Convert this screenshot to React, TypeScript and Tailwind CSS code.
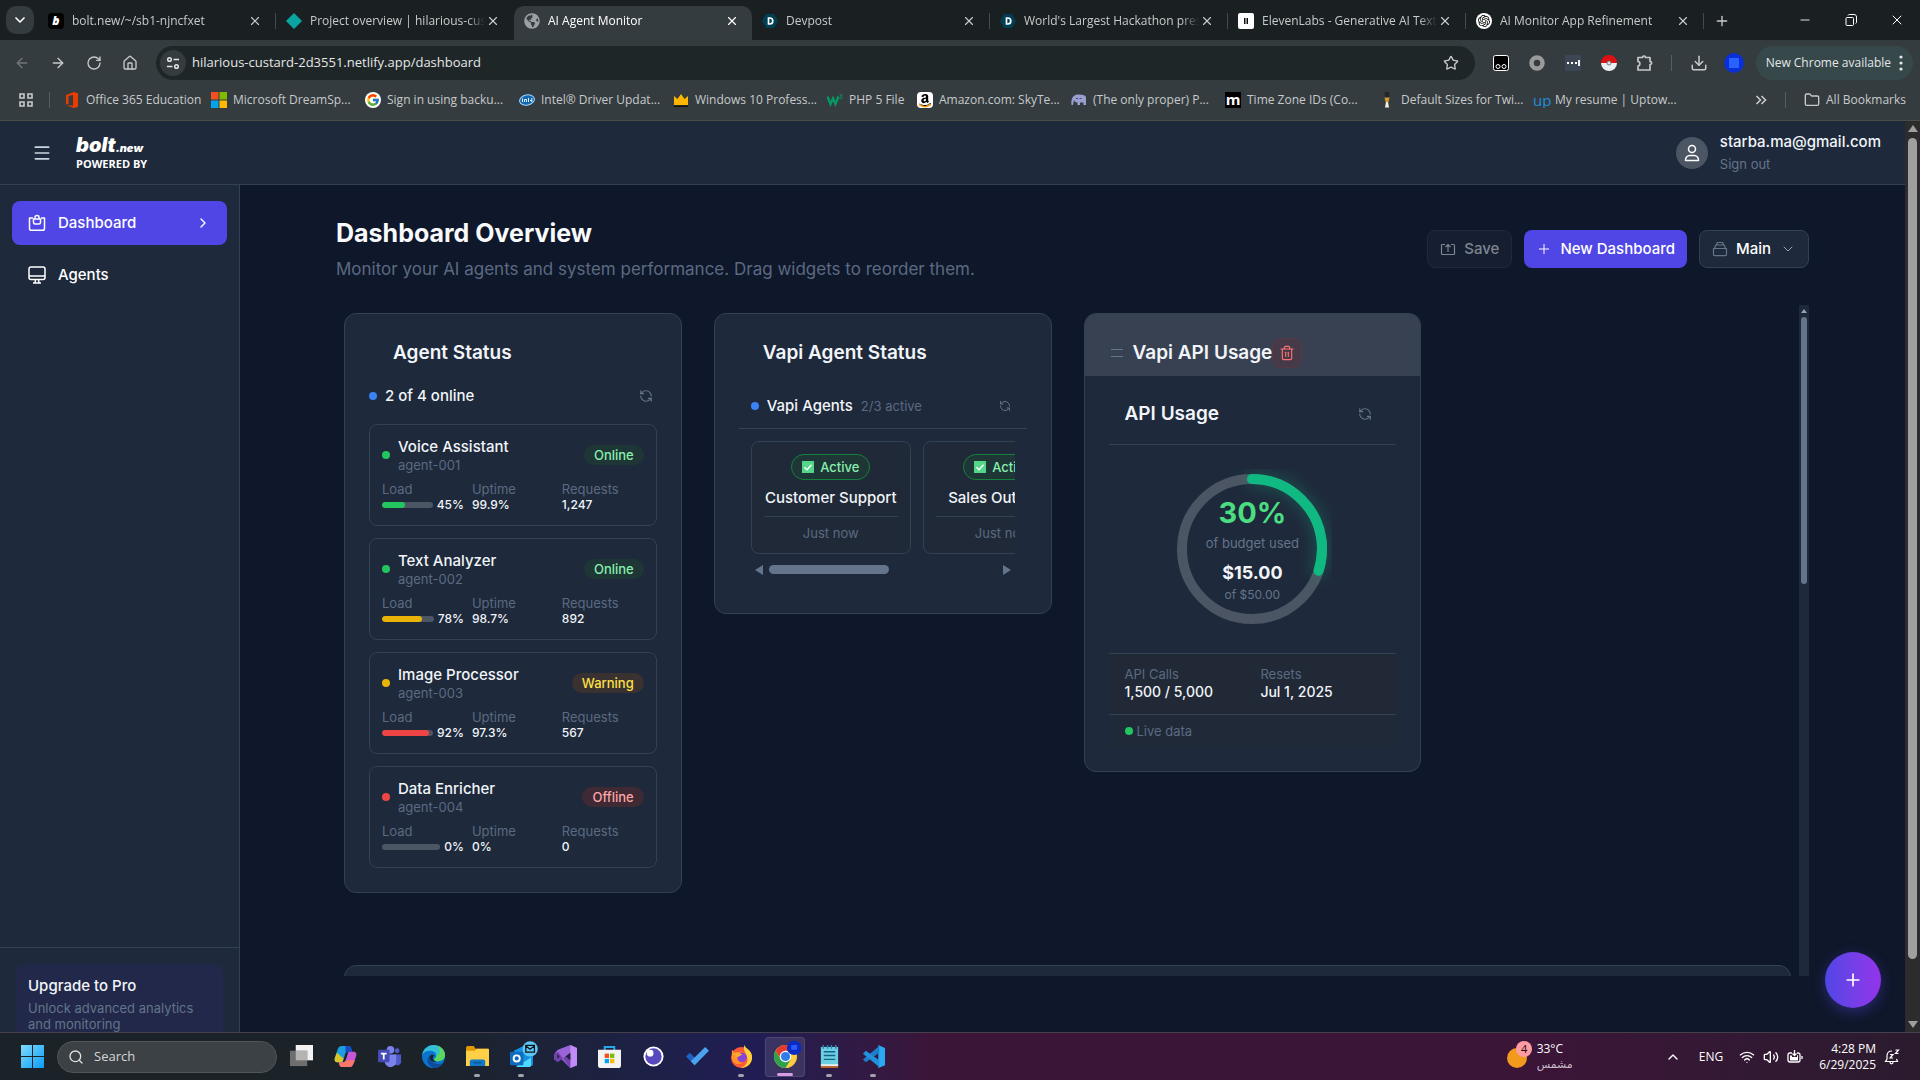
import type { ReactNode } from "react";
import {
  ArrowLeft,
  ArrowRight,
  ChevronDown,
  ChevronRight,
  ChevronUp,
  Download,
  Folder,
  House,
  Menu,
  Minus,
  Plus,
  RefreshCcw,
  RotateCw,
  Search,
  Star,
  Trash2,
  Volume2,
  Wifi,
  X,
} from "lucide-react";
import { FcGoogle } from "react-icons/fc";
import { SiOpenai } from "react-icons/si";
import { FaAmazon, FaGlobeAmericas } from "react-icons/fa";

/* ---------- browser ---------- */

const tabs: { title: string; icon: ReactNode; active?: boolean; divider?: boolean }[] = [
  {
    title: "bolt.new/~/sb1-njncfxet",
    divider: true,
    icon: <span className="grid size-4 place-items-center rounded-sm bg-black text-xs font-black italic text-white">b</span>,
  },
  {
    title: "Project overview | hilarious-cust",
    icon: (
      <svg viewBox="0 0 16 16" className="size-4">
        <path d="M8 0l8 8-8 8-8-8z" fill="#0aa5a0" />
      </svg>
    ),
  },
  { title: "AI Agent Monitor", active: true, icon: <FaGlobeAmericas className="size-4 text-[#9aa0a3]" /> },
  { title: "Devpost", divider: true, icon: <DevpostIcon /> },
  { title: "World's Largest Hackathon pres", divider: true, icon: <DevpostIcon /> },
  {
    title: "ElevenLabs - Generative AI Text",
    divider: true,
    icon: (
      <svg viewBox="0 0 16 16" className="size-4">
        <rect width="16" height="16" rx="2" fill="#fff" />
        <path d="M6 5h1.500v6H6zM8.500 5H10v6H8.500z" fill="#111" />
      </svg>
    ),
  },
  {
    title: "AI Monitor App Refinement",
    divider: true,
    icon: (
      <span className="grid size-4 place-items-center rounded-full bg-white">
        <SiOpenai className="size-3 text-black" />
      </span>
    ),
  },
];

function DevpostIcon() {
  return (
    <svg viewBox="0 0 16 16" className="size-4">
      <path d="M4 1h8l4 7-4 7H4L0 8z" fill="#003e54" />
      <path d="M6.500 5h1.300c2 0 3 1.200 3 3s-1 3-3 3H6.500z" fill="none" stroke="#fff" strokeWidth="1.700" />
    </svg>
  );
}

function WindowsLogo({ className }: { className: string }) {
  return (
    <svg viewBox="0 0 16 16" className={className}>
      <path d="M0 0h7.500v7.500H0z" fill="#f25022" />
      <path d="M8.500 0H16v7.500H8.500z" fill="#7fba00" />
      <path d="M0 8.500h7.500V16H0z" fill="#00a4ef" />
      <path d="M8.500 8.500H16V16H8.500z" fill="#ffb900" />
    </svg>
  );
}

const bookmarks: { label: string; width: string; icon: ReactNode }[] = [
  {
    label: "Office 365 Education",
    width: "w-[147px]",
    icon: (
      <svg viewBox="0 0 16 16" className="size-4">
        <path d="M10 0l4 1.300v13.400L10 16l-8-3 7 .8V3L4.500 4v7.500L2 12.500V3z" fill="#eb3c00" />
      </svg>
    ),
  },
  { label: "Microsoft DreamSp...", width: "w-[154px]", icon: <WindowsLogo className="size-4" /> },
  {
    label: "Sign in using backu...",
    width: "w-[154px]",
    icon: (
      <span className="grid size-4 place-items-center rounded-full bg-white">
        <FcGoogle className="size-3.5" />
      </span>
    ),
  },
  {
    label: "Intel® Driver Updat...",
    width: "w-[154px]",
    icon: (
      <svg viewBox="0 0 16 16" className="size-4">
        <ellipse cx="8" cy="8" rx="7.500" ry="5" fill="#1268b3" stroke="#a8d4f5" transform="rotate(-12 8 8)" />
        <path d="M3.500 6.500v3.500M5.500 10V7.500h2V10M9.500 6v4M11 8.500h2M12.800 6v4" stroke="#e3f2ff" fill="none" />
      </svg>
    ),
  },
  {
    label: "Windows 10 Profess...",
    width: "w-[154px]",
    icon: (
      <svg viewBox="0 0 16 16" className="size-4">
        <path d="M1 4l3.500 3L8 2l3.500 5L15 4v9H1z" fill="#ffb400" />
        <path d="M1 13.500h14V15H1z" fill="#14110a" />
      </svg>
    ),
  },
  {
    label: "PHP 5 File",
    width: "w-[90px]",
    icon: (
      <svg viewBox="0 0 16 16" className="size-4">
        <path d="M.5 4.500L3.500 12 6 6.500 8.500 12l3-7.500" fill="none" stroke="#059862" strokeWidth="2.400" />
        <path d="M12.500 3h2.500l-1.300 1.700c2 0 1.600 2.800-1 2" fill="none" stroke="#059862" />
      </svg>
    ),
  },
  {
    label: "Amazon.com: SkyTe...",
    width: "w-[154px]",
    icon: (
      <span className="relative grid size-4 place-items-center rounded-sm bg-white">
        <FaAmazon className="size-3.5 text-black" />
        <svg viewBox="0 0 14 4" className="absolute bottom-0 h-1 w-3.5" fill="none" stroke="#ff9900" strokeWidth="1.500">
          <path d="M1 .5c4 3 8 3 12 0" />
        </svg>
      </span>
    ),
  },
  {
    label: "(The only proper) P...",
    width: "w-[154px]",
    icon: (
      <svg viewBox="0 0 16 16" className="size-4">
        <path d="M3 4c2-2 10-2 12 1v8h-2.500v-2.500H9V13H6.500v-2.500C4 10.500 3 9 3 7.500L2 13H.5C0 9 1 5 3 4z" fill="#9a9fd0" />
        <path d="M5 6.500h2M8.500 6.500h2" stroke="#40447a" />
      </svg>
    ),
  },
  {
    label: "Time Zone IDs (Co...",
    width: "w-[154px]",
    icon: <span className="grid size-4 place-items-center bg-black pb-0.5 text-[15px] font-bold leading-3 text-white">m</span>,
  },
  {
    label: "Default Sizes for Twi...",
    width: "w-[154px]",
    icon: (
      <svg viewBox="0 0 16 16" className="size-4">
        <path d="M5.500 0h5l-.5 6H6z" fill="#262626" />
        <path d="M5.500 5.500h5L9.500 10h-3z" fill="#d49a32" />
        <path d="M7 10h2l1 5.500H6z" fill="#f5efe0" />
      </svg>
    ),
  },
  {
    label: "My resume | Uptow...",
    width: "w-[154px]",
    icon: <span className="w-4 text-[15px] leading-4 text-[#1d8fdc]">up</span>,
  },
];

function TabStrip() {
  return (
    <div className="flex h-10 items-end bg-[#1a2022]">
      <button aria-label="Search tabs" className="mb-1.5 ml-1.5 grid size-7 shrink-0 place-items-center rounded-[10px] bg-[#353c3f]">
        <ChevronDown className="size-4 text-white" strokeWidth={2.5} />
      </button>
      <div className="ml-1 flex min-w-0 flex-1">
        {tabs.map((tab) => (
          <div
            key={tab.title}
            className={
              tab.active
                ? "flex h-[34px] w-[238px] min-w-0 items-center rounded-t-[10px] bg-[#353c3f] pb-1 pl-2.5 pr-2 text-white"
                : "flex h-[34px] w-[238px] min-w-0 items-center pb-1 pl-2.5 text-[#c7cacb]"
            }
          >
            <span className="shrink-0">{tab.icon}</span>
            <button className="ml-2 min-w-0 flex-1 overflow-hidden whitespace-nowrap text-left mask-r-from-90%">{tab.title}</button>
            <button aria-label="Close tab" className="mr-1 grid size-4 shrink-0 place-items-center">
              <X className="size-3.5" strokeWidth={2} />
            </button>
            {!tab.active && <span className={tab.divider ? "ml-2 h-4 w-px bg-[#454c4f]" : "ml-2 h-4 w-px"} />}
          </div>
        ))}
        <button aria-label="New tab" className="ml-2 grid h-[34px] w-5 place-items-center pb-1 text-[#c7cacb]">
          <Plus className="size-4" />
        </button>
      </div>
      <div className="flex h-10 text-white">
        <button aria-label="Minimize" className="grid w-[46px] place-items-center">
          <Minus className="size-3.5" strokeWidth={1.5} />
        </button>
        <button aria-label="Restore" className="grid w-[46px] place-items-center">
          <svg viewBox="0 0 12 12" className="size-3" fill="none" stroke="currentColor">
            <rect x="1" y="3.500" width="7.500" height="8" rx="1" />
            <path d="M3 1.500C3 1 3.500.5 4.500.5H9C10.500.5 11.500 1.500 11.500 3v5c0 1-.5 1.500-1 1.500" />
          </svg>
        </button>
        <button aria-label="Close" className="grid w-[46px] place-items-center">
          <X className="size-4" strokeWidth={1.5} />
        </button>
      </div>
    </div>
  );
}

function AddressBar() {
  return (
    <div className="flex h-[46px] items-center bg-[#353c3f] text-[#c7cacb]">
      <div className="flex w-[156px] shrink-0 items-center gap-5 pl-3.5">
        <button aria-label="Back" className="text-[#71777a]">
          <ArrowLeft className="size-4" />
        </button>
        <button aria-label="Forward">
          <ArrowRight className="size-4" />
        </button>
        <button aria-label="Reload">
          <RotateCw className="size-4" />
        </button>
        <button aria-label="Home">
          <House className="size-4" />
        </button>
      </div>
      <div className="flex h-[34px] min-w-0 flex-1 items-center rounded-full bg-[#1f2628] pl-1 pr-4">
        <button aria-label="View site information" className="grid size-[26px] place-items-center rounded-full bg-[#353c3f]">
          <svg viewBox="0 0 16 16" className="size-4" fill="none" stroke="#e3e5e5" strokeWidth="1.500">
            <circle cx="4.500" cy="4.500" r="1.800" />
            <path d="M8.500 4.500H14M2 11.500h5.500" />
            <circle cx="11.500" cy="11.500" r="1.800" />
          </svg>
        </button>
        <input
          aria-label="Address"
          className="ml-1.5 min-w-0 flex-1 bg-transparent text-[13px] text-[#e6e8e8] outline-none"
          defaultValue="hilarious-custard-2d3551.netlify.app/dashboard"
        />
        <button aria-label="Bookmark this tab">
          <Star className="size-4" />
        </button>
      </div>
      <div className="flex shrink-0 items-center gap-5 pl-[18px]">
        <svg viewBox="0 0 16 16" className="size-4">
          <rect x=".5" y=".5" width="15" height="15" rx="2" fill="#000" stroke="#fff" />
          <circle cx="5" cy="11.500" r="2" fill="none" stroke="#fff" />
          <circle cx="11" cy="11.500" r="2" fill="none" stroke="#fff" />
        </svg>
        <svg viewBox="0 0 16 16" className="size-4">
          <circle cx="8" cy="8" r="5.500" fill="none" stroke="#9a9a9a" strokeWidth="4.500" />
        </svg>
        <svg viewBox="0 0 16 16" className="size-4">
          <rect width="16" height="16" rx="1" fill="#3c4654" />
          <path d="M2 8h2M6 8h2M10 8h2M14 5v6" stroke="#fff" strokeWidth="1.800" />
        </svg>
        <svg viewBox="0 0 16 16" className="size-4">
          <path d="M0 8a8 8 0 0116 0z" fill="#e01010" />
          <path d="M0 8a8 8 0 0016 0z" fill="#eceff1" />
          <circle cx="8" cy="8" r="2" fill="#dfe6ea" stroke="#6b7c87" />
        </svg>
        <button aria-label="Extensions">
          <svg viewBox="0 0 16 16" className="size-4" fill="none" stroke="currentColor" strokeWidth="1.700" strokeLinejoin="round">
            <path d="M1 2.500h4.500c0-2 3-2 3 0H13v4c2.200 0 2.200 3 0 3V15H1v-4c2.500 0 2.500-4.500 0-4.500z" />
          </svg>
        </button>
      </div>
      <span className="ml-[18px] h-4 w-px bg-[#565d60]" />
      <button aria-label="Downloads" className="ml-[18px]">
        <Download className="size-[18px]" />
      </button>
      <button aria-label="Profile" className="ml-4 grid size-5 place-items-center rounded-full bg-[#0a2fd6]">
        <span className="size-2.5 bg-[#2a62ff]" />
      </button>
      <button className="ml-3 mr-[7px] flex h-[34px] items-center gap-2 rounded-full bg-[#37484b] px-2.5 text-[#e3e7e7]">
        New Chrome available
        <svg viewBox="0 0 4 16" className="h-4 w-1" fill="#e3e7e7">
          <circle cx="2" cy="2" r="1.600" />
          <circle cx="2" cy="8" r="1.600" />
          <circle cx="2" cy="14" r="1.600" />
        </svg>
      </button>
    </div>
  );
}

function BookmarksBar() {
  return (
    <div className="flex h-[35px] items-center border-b border-[#4a4c4a] bg-[#353c3f] pb-1.5 pr-3.5 text-[#c7cacb]">
      <button aria-label="Apps" className="ml-[19px]">
        <svg viewBox="0 0 14 14" className="size-3.5" fill="none" stroke="currentColor" strokeWidth="1.600">
          <path d="M1 1h4v4H1zM9 1h4v4H9zM1 9h4v4H1zM9 9h4v4H9z" />
        </svg>
      </button>
      <span className="ml-4 h-4 w-px shrink-0 bg-[#565d60]" />
      <nav className="ml-3.5 flex min-w-0 flex-1 overflow-hidden">
        {bookmarks.map((b) => (
          <a key={b.label} href="#" className={`flex shrink-0 items-center gap-1.5 whitespace-nowrap ${b.width}`}>
            {b.icon}
            {b.label}
          </a>
        ))}
      </nav>
      <button aria-label="More bookmarks">
        <svg viewBox="0 0 12 12" className="size-3" fill="none" stroke="currentColor" strokeWidth="1.600">
          <path d="M1.500 2l4 4-4 4M6.500 2l4 4-4 4" />
        </svg>
      </button>
      <span className="ml-[18px] h-4 w-px bg-[#565d60]" />
      <button className="ml-[18px] flex items-center gap-1.5 whitespace-nowrap">
        <Folder className="size-4" />
        All Bookmarks
      </button>
    </div>
  );
}

/* ---------- app ---------- */

function Header() {
  return (
    <header className="flex h-16 shrink-0 items-center border-b border-[#334155] bg-[#1e293b] pl-8 pr-6">
      <button aria-label="Toggle menu" className="text-[#cbd5e1]">
        <Menu className="size-5" />
      </button>
      <a href="#" className="ml-6 text-white">
        <span className="flex items-baseline font-black italic leading-5">
          <span className="text-xl leading-5">bolt</span>
          <span className="text-[11px] leading-5">.new</span>
        </span>
        <span className="block font-['Open_Sans'] text-[11px] font-bold leading-3">POWERED BY</span>
      </a>
      <div className="ml-auto flex items-center gap-3">
        <span className="grid size-8 place-items-center rounded-full bg-[#4b5563]">
          <svg viewBox="0 0 16 18" className="h-[18px] w-4" fill="none" stroke="#fff" strokeWidth="1.500">
            <circle cx="8" cy="5" r="3.500" />
            <path d="M1.500 16.500c0-3 2-5 4.500-5h4c2.500 0 4.500 2 4.500 5z" strokeLinejoin="round" />
          </svg>
        </span>
        <div className="flex flex-col items-start">
          <span className="text-[15px] font-medium leading-5 text-[#f1f5f9]">starba.ma@gmail.com</span>
          <button className="mt-0.5 text-[13px] leading-5 text-[#64748b]">Sign out</button>
        </div>
      </div>
    </header>
  );
}

function DashboardIcon() {
  return (
    <svg viewBox="0 0 18 18" className="size-[18px]" fill="none" stroke="currentColor" strokeWidth="1.500" strokeLinejoin="round">
      <path d="M5 4H1.500v10.500c0 1.200.6 1.800 1.800 1.800h11.400c1.200 0 1.800-.6 1.800-1.800V4H13" />
      <path d="M5.500 5h7v3.500c0 1-.6 1.500-1.500 1.500H7c-.9 0-1.500-.5-1.500-1.500zM7 5V3.200c0-1 .6-1.700 2-1.700s2 .7 2 1.700V5" />
    </svg>
  );
}

function MonitorIcon() {
  return (
    <svg viewBox="0 0 18 18" className="size-[18px]" fill="none" stroke="currentColor" strokeWidth="1.500">
      <rect x="1" y="1" width="16" height="12.500" rx="2" />
      <path d="M1 10h16M7.500 13.500L7 17M10.500 13.500L11 17M5 17h8" />
    </svg>
  );
}

function Sidebar() {
  return (
    <aside className="flex w-60 shrink-0 flex-col justify-between overflow-hidden border-r border-[#334155] bg-[#1e293b]">
      <nav className="flex flex-col gap-2 px-3 py-4 text-[15px] font-medium text-white">
        <a href="#" className="flex h-11 items-center gap-3 rounded-lg bg-[#4f46e5] px-4">
          <DashboardIcon />
          Dashboard
          <ChevronRight className="ml-auto size-4" />
        </a>
        <a href="#" className="flex h-11 items-center gap-3 rounded-lg px-4">
          <MonitorIcon />
          Agents
        </a>
      </nav>
      <div className="h-[85px] border-t border-[#334155] p-4">
        <div className="rounded-lg bg-[#212849] p-3">
          <p className="text-[15px] font-medium leading-5 text-[#f1f5f9]">Upgrade to Pro</p>
          <p className="mt-1 text-[13px] leading-4 text-[#64748b]">Unlock advanced analytics and monitoring</p>
        </div>
      </div>
    </aside>
  );
}

function Toolbar() {
  return (
    <div className="flex items-center justify-between">
      <div>
        <h1 className="text-[25px] font-bold leading-8 text-[#f8fafc]">Dashboard Overview</h1>
        <p className="mt-2 text-[17px] leading-6 text-[#5b6a82]">
          Monitor your AI agents and system performance. Drag widgets to reorder them.
        </p>
      </div>
      <div className="flex gap-3 text-[15px] font-medium">
        <button disabled className="flex h-[38px] items-center gap-2 rounded-lg border border-[#1e293b] bg-[#161f31] px-3 text-[#7f858f]">
          <svg viewBox="0 0 16 16" className="size-4" fill="none" stroke="currentColor" strokeWidth="1.200">
            <path d="M5 3.500H2.500c-.7 0-1 .3-1 1v8c0 .7.3 1 1 1h11c.7 0 1-.3 1-1v-8c0-.7-.3-1-1-1H11M8 11V4M5.500 6L8 3.500 10.500 6" />
          </svg>
          Save
        </button>
        <button className="flex h-[38px] items-center gap-2 rounded-lg bg-[#4f46e5] px-3 text-white">
          <Plus className="size-4" strokeWidth={1.5} />
          New Dashboard
        </button>
        <label className="flex h-[38px] items-center gap-2 rounded-lg border border-[#334155] bg-[#1e293b] px-3 text-white">
          <svg viewBox="0 0 16 16" className="size-4" fill="none" stroke="#64748b" strokeWidth="1.200" strokeLinejoin="round">
            <path d="M1.500 7.500h13v6c0 .8-.4 1.200-1.200 1.200H2.700c-.8 0-1.200-.4-1.200-1.200zM2.500 7.500L3.800 4h8.400l1.300 3.500M4.500 4l.8-2.500h5.400l.8 2.500" />
          </svg>
          <select aria-label="Dashboard" className="appearance-none bg-transparent outline-none">
            <option>Main</option>
          </select>
          <ChevronDown className="size-4 text-[#94a3b8]" strokeWidth={1.5} />
        </label>
      </div>
    </div>
  );
}

const statusStyles = {
  Online: { dot: "bg-[#22c55e]", badge: "bg-[#1e3636] text-[#86efac]" },
  Warning: { dot: "bg-[#eab308]", badge: "bg-[#3a3230] text-[#fde047]" },
  Offline: { dot: "bg-[#ef4444]", badge: "bg-[#3e2934] text-[#fca5a5]" },
};

const agents: {
  id: string;
  name: string;
  status: keyof typeof statusStyles;
  load: number;
  bar: string;
  uptime: string;
  requests: string;
}[] = [
  { id: "agent-001", name: "Voice Assistant", status: "Online", load: 45, bar: "bg-[#22c55e]", uptime: "99.9%", requests: "1,247" },
  { id: "agent-002", name: "Text Analyzer", status: "Online", load: 78, bar: "bg-[#eab308]", uptime: "98.7%", requests: "892" },
  { id: "agent-003", name: "Image Processor", status: "Warning", load: 92, bar: "bg-[#ef4444]", uptime: "97.3%", requests: "567" },
  { id: "agent-004", name: "Data Enricher", status: "Offline", load: 0, bar: "bg-[#22c55e]", uptime: "0%", requests: "0" },
];

function Widget({ title, hovered, children }: { title: string; hovered?: boolean; children: ReactNode }) {
  return (
    <section className="overflow-hidden rounded-xl border border-[#334155] bg-[#1e293b]">
      <div className={hovered ? "flex items-center bg-[#384152] px-6 pb-2 pt-6" : "flex items-center px-6 pb-2 pt-6"}>
        <span className="mr-2 grid h-[30px] w-4 place-items-center">
          {hovered && (
            <svg viewBox="0 0 12 8" className="h-2 w-3" stroke="#64748b">
              <path d="M0 .5h12M0 7.500h12" />
            </svg>
          )}
        </span>
        <h2 className="whitespace-nowrap text-[19px] font-semibold leading-[30px] text-[#f1f5f9]">{title}</h2>
        {hovered && (
          <button aria-label="Remove widget" className="grid size-[30px] place-items-center rounded-lg border border-[#543a47] bg-[#473a48] text-[#f87171]">
            <Trash2 className="size-4" strokeWidth={1.75} />
          </button>
        )}
      </div>
      {children}
    </section>
  );
}

function AgentStatus() {
  return (
    <Widget title="Agent Status">
      <div className="px-6 pb-6">
        <div className="mb-2 flex h-10 items-center">
          <span className="size-2 rounded-full bg-[#3b82f6]" />
          <span className="ml-2 text-[15px] font-medium text-[#f1f5f9]">2 of 4 online</span>
          <button aria-label="Refresh agents" className="ml-auto px-1 text-[#64748b]">
            <RefreshCcw className="size-3.5" />
          </button>
        </div>
        <ul className="flex flex-col gap-3">
          {agents.map((agent) => (
            <li key={agent.id} className="rounded-lg border border-[#334155] p-3">
              <div className="mb-2 flex items-center">
                <span className={`size-2 rounded-full ${statusStyles[agent.status].dot}`} />
                <div className="ml-2">
                  <p className="text-[15px] font-medium leading-5 text-[#f1f5f9]">{agent.name}</p>
                  <p className="text-[13px] leading-4 text-[#5b6a82]">{agent.id}</p>
                </div>
                <span className={`ml-auto rounded-full px-2.5 text-[13px] font-medium leading-5 ${statusStyles[agent.status].badge}`}>
                  {agent.status}
                </span>
              </div>
              <dl className="grid grid-cols-3 gap-2 text-xs leading-4">
                <div>
                  <dt className="text-[13px] text-[#5b6a82]">Load</dt>
                  <dd className="flex items-center gap-1 font-medium text-[#f1f5f9]">
                    <span className="h-1.5 flex-1 overflow-hidden rounded-full bg-[#4b5563]">
                      <span className={`block h-full rounded-full ${agent.bar}`} style={{ width: `${agent.load}%` }} />
                    </span>
                    {agent.load}%
                  </dd>
                </div>
                <div>
                  <dt className="text-[13px] text-[#5b6a82]">Uptime</dt>
                  <dd className="font-medium text-[#f1f5f9]">{agent.uptime}</dd>
                </div>
                <div>
                  <dt className="text-[13px] text-[#5b6a82]">Requests</dt>
                  <dd className="font-medium text-[#f1f5f9]">{agent.requests}</dd>
                </div>
              </dl>
            </li>
          ))}
        </ul>
      </div>
    </Widget>
  );
}

function VapiAgentStatus() {
  return (
    <Widget title="Vapi Agent Status">
      <div className="px-6 pb-6 pt-2">
        <div className="flex items-center border-b border-[#334155] p-3">
          <span className="size-2 rounded-full bg-[#3b82f6]" />
          <span className="ml-2 text-[15px] font-medium leading-5 text-[#f1f5f9]">Vapi Agents</span>
          <span className="ml-2 text-[13px] leading-5 text-[#5b6a82]">2/3 active</span>
          <button aria-label="Refresh Vapi agents" className="ml-auto pr-1 text-[#64748b]">
            <RefreshCcw className="size-3" />
          </button>
        </div>
        <div className="p-3">
          <div className="flex gap-3 overflow-hidden">
            {["Customer Support", "Sales Outreach"].map((name) => (
              <div key={name} className="flex w-40 shrink-0 flex-col items-center rounded-lg border border-[#334155] bg-[#202937] p-3">
                <span className="flex items-center gap-1.5 rounded-full border border-[#15803d] bg-[#1e3636] px-2.5 text-[13px] font-medium leading-6 text-[#86efac]">
                  <svg viewBox="0 0 12 12" className="size-3">
                    <path d="M0 0h12v12H0z" fill="#54d68a" />
                    <path d="M2.500 6.200L5 8.700l4.500-5" fill="none" stroke="#fff" strokeWidth="1.400" />
                  </svg>
                  Active
                </span>
                <p className="mt-2 whitespace-nowrap text-[15px] font-medium leading-5 text-[#f1f5f9]">{name}</p>
                <p className="mt-2 w-full border-t border-[#334155] pt-2 text-center text-[13px] leading-4 text-[#5b6a82]">Just now</p>
              </div>
            ))}
          </div>
          <div className="mt-2 flex h-[15px] items-center px-1">
            <svg viewBox="0 0 8 10" className="h-2.5 w-2" fill="#64748b">
              <path d="M8 0v10L0 5z" />
            </svg>
            <div className="mx-1.5 h-[9px] flex-1">
              <div className="h-full w-[53%] rounded-full bg-[#64748b]" />
            </div>
            <svg viewBox="0 0 8 10" className="h-2.5 w-2" fill="#64748b">
              <path d="M0 0v10l8-5z" />
            </svg>
          </div>
        </div>
      </div>
    </Widget>
  );
}

function VapiUsage() {
  const radius = 70;
  const circumference = 2 * Math.PI * radius;
  return (
    <Widget title="Vapi API Usage" hovered>
      <div className="px-6 pb-6 pt-2">
        <div className="flex items-center justify-between border-b border-[#334155] p-4">
          <h3 className="text-[19px] font-semibold leading-7 text-[#f1f5f9]">API Usage</h3>
          <button aria-label="Refresh usage" className="px-2 text-[#64748b]">
            <RefreshCcw className="size-3.5" />
          </button>
        </div>
        <div className="grid place-items-center py-6">
          <svg viewBox="0 0 160 160" className="col-start-1 row-start-1 size-40 -rotate-90" fill="none" strokeWidth="10">
            <circle cx="80" cy="80" r={radius} stroke="#4b5563" />
            <circle
              cx="80"
              cy="80"
              r={radius}
              stroke="#10b981"
              strokeLinecap="round"
              strokeDasharray={`${circumference * 0.3} ${circumference}`}
              className="drop-shadow-[0_0_8px_rgba(16,185,129,0.4)]"
            />
          </svg>
          <div className="col-start-1 row-start-1 text-center">
            <p className="text-[29px] font-bold leading-9 text-[#4ade80]">30%</p>
            <p className="mt-1 text-[13px] leading-4 text-[#64748b]">of budget used</p>
            <p className="mt-2 text-lg font-bold leading-7 text-[#f1f5f9]">$15.00</p>
            <p className="text-xs leading-4 text-[#64748b]">of $50.00</p>
          </div>
        </div>
        <dl className="grid grid-cols-2 gap-4 border-y border-[#334155] bg-[#212936] px-4 py-3">
          <div>
            <dt className="text-[13px] leading-4 text-[#5b6a82]">API Calls</dt>
            <dd className="text-sm font-medium leading-5 text-[#f1f5f9]">1,500 / 5,000</dd>
          </div>
          <div>
            <dt className="text-[13px] leading-4 text-[#5b6a82]">Resets</dt>
            <dd className="text-sm font-medium leading-5 text-[#f1f5f9]">Jul 1, 2025</dd>
          </div>
        </dl>
        <p className="flex items-center gap-1 bg-[#202937] px-4 py-2 text-[13px] leading-4 text-[#5b6a82]">
          <span className="size-2 rounded-full bg-[#22c55e]" />
          Live data
        </p>
      </div>
    </Widget>
  );
}

function Dashboard() {
  return (
    <main className="relative flex min-w-0 flex-1 flex-col bg-[#0f172a] px-24 pb-14 pt-8">
      <Toolbar />
      <div className="mt-6 flex min-h-0 flex-1">
        <div className="min-w-0 flex-1 overflow-hidden p-2">
          <div className="grid grid-cols-4 items-start gap-x-8 gap-y-[72px]">
            <AgentStatus />
            <VapiAgentStatus />
            <VapiUsage />
            <section className="col-span-4 h-64 rounded-xl border border-[#334155] bg-[#1e293b]" />
          </div>
        </div>
        <div className="flex w-2.5 flex-col items-center bg-[#1e293b] pt-1">
          <svg viewBox="0 0 6 4" className="h-1 w-1.5" fill="#94a3b8">
            <path d="M3 0l3 4H0z" />
          </svg>
          <div className="mt-1 h-[40%] w-1.5 rounded-full bg-[#64748b]" />
        </div>
      </div>
      <button
        aria-label="Add widget"
        className="absolute bottom-6 right-6 grid size-14 place-items-center rounded-full bg-linear-to-r from-[#4f46e5] to-[#9333ea] text-white shadow-[0_4px_14px_rgba(79,70,229,0.4)]"
      >
        <Plus className="size-5" />
      </button>
    </main>
  );
}

function PageScrollbar() {
  return (
    <div className="flex w-[15px] shrink-0 flex-col items-center bg-[#2c2c2c] py-1">
      <svg viewBox="0 0 10 7" className="h-[7px] w-2.5" fill="#9f9f9f">
        <path d="M5 0l5 7H0z" />
      </svg>
      <div className="mt-1.5 min-h-0 flex-1">
        <div className="h-[93%] w-[9px] rounded-full bg-[#9f9f9f]" />
      </div>
      <svg viewBox="0 0 10 7" className="h-[7px] w-2.5" fill="#9f9f9f">
        <path d="M0 0h10L5 7z" />
      </svg>
    </div>
  );
}

/* ---------- taskbar ---------- */

const taskbarApps: { name: string; running?: boolean; active?: boolean; icon: ReactNode }[] = [
  {
    name: "Task View",
    icon: (
      <>
        <path d="M6 0h18v16H6z" fill="#f2f2f2" />
        <path d="M0 6h18v16H0z" fill="#6e6e6e" />
        <path d="M6 6h12v10H6z" fill="#b4b4b4" />
      </>
    ),
  },
  {
    name: "Copilot",
    icon: (
      <>
        <path d="M8 1h7c2 0 2.500 1 3 3l1 3h-4c-2 0-3 1-3.500 3L9 18H4c-3 0-4-2-3-5L4 4c1-2 2-3 4-3z" fill="#1b9de2" />
        <path d="M3 8l-2 5c-1 3 0 5 3 5h3c2 0 2.500-2 3-4z" fill="#d8c528" />
        <path d="M16 23H9c-2 0-3-1-3.500-3L5 18h4c2 0 3-1 3.500-3L15 7h5c3 0 4 2 3 5l-3 8c-1 2-2 3-4 3z" fill="#c357d8" />
        <path d="M16 23H9c-2 0-3-1-3.500-3L5 18h4c2 0 3-1 3.300-2l9.700 0-2 4c-1 2-2 3-4 3z" fill="#f8776a" />
        <path d="M12 1h3c2 0 2.500 1 3 3l1 3h-4l-3 1z" fill="#1a47c4" />
      </>
    ),
  },
  {
    name: "Teams",
    icon: (
      <>
        <circle cx="13" cy="5" r="4" fill="#7b83eb" />
        <circle cx="20" cy="6" r="2.500" fill="#5059c9" />
        <path d="M16 10h8v6a4 4 0 01-8 2z" fill="#5059c9" />
        <path d="M7 10h12v6a6 6 0 01-12 2z" fill="#7b83eb" />
        <rect y="5" width="12" height="13" rx="1" fill="#444bb5" />
        <path d="M3 9h6M6 9v6" stroke="#fff" strokeWidth="1.800" />
      </>
    ),
  },
  {
    name: "Edge",
    icon: (
      <>
        <circle cx="12" cy="12" r="12" fill="#0b74cf" />
        <path d="M0 11C1 3 8 0 12 0c8 0 12 6 12 10 0 5-4 7-7 7s-4-1-4-2 2-2 2-4c0-3-3-5-7-5-4 0-7 2-8 5z" fill="#34bfd6" />
        <path d="M16 1c5 1 8 6 8 9 0 5-4 7-7 7s-4-1-4-2 3-2 2-5c5 1 4-6 1-9z" fill="#5bd75b" />
        <path d="M9 10c-3 6 3 12 13 9-3 4-7 5-10 5-6-2-9-9-3-14z" fill="#0f4d9c" />
        <path d="M13 11c-3 2-2 6 3 7-7 1-10-5-6-8z" fill="#1b2529" />
      </>
    ),
  },
  {
    name: "File Explorer",
    running: true,
    icon: (
      <>
        <path d="M0 3c0-1 .5-2 2-2h6l2 3h13v6H0z" fill="#e09a00" />
        <path d="M0 6h9l2-2h12c1 0 1 .5 1 1v17H0z" fill="#ffcf48" />
        <path d="M4 22v-5c0-1 1-2 2-2h12c1 0 2 1 2 2v5z" fill="#0f78c8" />
        <path d="M8 18.500h8" stroke="#0a5796" strokeWidth="1.500" />
      </>
    ),
  },
  {
    name: "Outlook",
    running: true,
    icon: (
      <>
        <path d="M4 6l10-5 10 6v13c0 1-1 2-2 2H7z" fill="#1490df" />
        <path d="M6 23l16-10v8c0 1-1 2-2 2z" fill="#50d9ff" />
        <rect y="7" width="14" height="14" rx="1" fill="#0f6cbd" />
        <circle cx="7" cy="14" r="3.200" fill="none" stroke="#fff" strokeWidth="2" />
        <circle cx="21" cy="4" r="8" fill="#5cc8f8" />
        <path d="M16.500.5h9v7h-9zM16.500 1L21 4.500 25.500 1" fill="none" stroke="#111" strokeWidth="1.300" />
      </>
    ),
  },
  {
    name: "Visual Studio",
    icon: (
      <>
        <path d="M17 0l7 3v18l-7 3L1 8l3-3z" fill="#9a63d8" />
        <path d="M17 0l7 3v18l-7 3z" fill="#c08bf5" />
        <path d="M17 24L4 7 0 9v6l4 3L17 8z" fill="#7442ac" />
        <path d="M3.500 9.500v5L6 12z" fill="#1c2440" />
        <path d="M17 8v8l-5-4z" fill="#1c2440" />
      </>
    ),
  },
  {
    name: "Microsoft Store",
    icon: (
      <>
        <path d="M7 6V2h10v4" fill="none" stroke="#28a8ea" strokeWidth="2" />
        <path d="M0 5h24v16c0 2-1 3-3 3H3c-2 0-3-1-3-3z" fill="#f3f3f3" />
        <path d="M7 9h4.500v4.500H7z" fill="#f25022" />
        <path d="M12.500 9H17v4.500h-4.500z" fill="#7fba00" />
        <path d="M7 14.500h4.500V19H7z" fill="#00a4ef" />
        <path d="M12.500 14.500H17V19h-4.500z" fill="#ffb900" />
      </>
    ),
  },
  {
    name: "Insomnia",
    icon: (
      <>
        <circle cx="12" cy="12" r="10.500" fill="#fff" />
        <circle cx="12" cy="12" r="8.500" fill="#5849be" />
        <circle cx="8.500" cy="8.500" r="3.500" fill="#fff" />
      </>
    ),
  },
  {
    name: "To Do",
    icon: (
      <>
        <path d="M0 12l4-4 9 9-4 4z" fill="#1f62c4" />
        <path d="M5 17L20 2l4 4L9 21z" fill="#4ba3ee" />
      </>
    ),
  },
  {
    name: "Firefox",
    running: true,
    icon: (
      <>
        <circle cx="12" cy="13" r="11" fill="#ff5a36" />
        <path d="M15 0c1 4 9 6 8 14-1 7-7 10-12 10 6-2 8-7 7-11-1-5-5-7-3-13z" fill="#ffd23c" />
        <path d="M2 5l3 3 7-1-3 4c-3 5 1 8 5 7-6 5-13 0-12-7z" fill="#ff9526" />
        <circle cx="12.500" cy="13" r="5" fill="#8a45d8" />
        <path d="M4 9c4-2 7 0 9 1l-4 2c-1 2-3 0-5-3z" fill="#ffac2e" />
      </>
    ),
  },
  {
    name: "Chrome",
    running: true,
    active: true,
    icon: (
      <>
        <circle cx="12" cy="12" r="12" fill="#ffcd40" />
        <path d="M1.600 6A12 12 0 0122.400 6H12l-5 9z" fill="#e33b2e" />
        <path d="M1.600 6A12 12 0 0012 24l5.500-9H7z" fill="#2ca24c" />
        <circle cx="12" cy="12" r="6" fill="#fff" />
        <circle cx="12" cy="12" r="4.800" fill="#2f7de9" />
        <circle cx="21" cy="3" r="7.500" fill="#0a2cc4" />
        <path d="M18 0h6v5h-6z" fill="#2a5bff" />
      </>
    ),
  },
  {
    name: "Notepad",
    running: true,
    icon: (
      <>
        <path d="M3 2h18v19H3z" fill="#6bd0e2" />
        <path d="M3 21h18v3H3z" fill="#b3602b" />
        <path d="M3 20h18v2H3z" fill="#e9edef" />
        <path d="M6 7h12M6 11h12M6 15h12" stroke="#15628a" strokeWidth="1.500" />
        <path d="M5.500 0v4M10 0v4M14 0v4M18.500 0v4" stroke="#2a87a8" strokeWidth="1.500" />
      </>
    ),
  },
  {
    name: "VS Code",
    running: true,
    icon: (
      <>
        <path d="M17 0l7 3v18l-7 3z" fill="#2aa8f2" />
        <path d="M18 1L1 15l3 3 14-10z" fill="#1c7dc8" />
        <path d="M18 23L1 9l3-3 14 10z" fill="#2390dc" />
      </>
    ),
  },
];

function Taskbar() {
  return (
    <footer className="flex h-12 shrink-0 items-center border-t border-[#45414c] bg-linear-to-r from-[#3b1538] from-80% to-[#2b1b2f] pr-5 font-['Open_Sans','Noto_Sans',sans-serif] text-white">
      <div className="flex h-full flex-1 items-center bg-linear-to-r from-[#1b2328] from-28% via-[#201d54] via-50% to-[#3b1538] to-62% pl-2.5">
        <button aria-label="Start" className="grid h-11 w-11 place-items-center">
          <svg viewBox="0 0 23 23" className="size-[23px]">
            <defs>
              <linearGradient id="start" x1="0" y1="0" x2="1" y2="1">
                <stop stopColor="#7fdcff" />
                <stop offset="1" stopColor="#0c9cf5" />
              </linearGradient>
            </defs>
            <path d="M0 0h11v11H0zM12 0h11v11H12zM0 12h11v11H0zM12 12h11v11H12z" fill="url(#start)" />
          </svg>
        </button>
        <label className="ml-[3px] mr-0.5 flex h-8 w-[220px] items-center gap-2.5 rounded-full border border-[#4f5558] bg-[#3b4144] pl-2.5">
          <Search className="size-4 text-[#dfe1e2]" />
          <input aria-label="Search" placeholder="Search" className="w-32 bg-transparent text-[13px] text-white outline-none placeholder:text-[#d4d6d7]" />
        </label>
        {taskbarApps.map((app) => (
          <button
            key={app.name}
            aria-label={app.name}
            className={
              app.active
                ? "relative mx-0.5 grid h-10 w-10 place-items-center rounded-sm border border-white/10 bg-white/10"
                : "relative mx-0.5 grid h-10 w-10 place-items-center"
            }
          >
            <svg viewBox="0 0 24 24" className="size-[23px] overflow-visible">
              {app.icon}
            </svg>
            {app.running && (
              <span
                className={
                  app.active
                    ? "absolute bottom-0 h-[3px] w-4 rounded-full bg-[#d99be6]"
                    : "absolute bottom-0 h-[3px] w-1.5 rounded-full bg-[#a3a3ab]"
                }
              />
            )}
          </button>
        ))}
      </div>
      <button className="mr-23 flex items-center gap-1 text-left text-xs">
        <svg viewBox="0 0 26 28" className="mb-1 h-7 w-[26px]">
          <circle cx="10" cy="17" r="10" fill="#f29a1c" />
          <circle cx="17" cy="8" r="8" fill="#ff9ba3" />
          <text x="14" y="12" fontSize="11" fill="#1d1014">
            4
          </text>
        </svg>
        <span className="flex flex-col leading-4">
          33°C
          <span lang="ar" className="font-['DejaVu_Sans',sans-serif] text-[11px] text-[#c9bcc9]">
            مشمس
          </span>
        </span>
      </button>
      <button aria-label="Show hidden icons">
        <ChevronUp className="size-4" />
      </button>
      <button className="ml-[18px] text-xs">ENG</button>
      <button aria-label="Network, volume and battery" className="ml-4 flex items-center gap-2">
        <Wifi className="size-4" />
        <Volume2 className="size-4" />
        <svg viewBox="0 0 16 14" className="h-3.5 w-4" fill="none" stroke="#fff" strokeWidth="1.300">
          <path d="M5 3H3C1.700 3 1 3.700 1 5v5c0 1.300.7 2 2 2h8c1.300 0 2-.7 2-2V5c0-1.300-.7-2-2-2h-1M15 6v3" />
          <path d="M3 5.500h2V7h5V5.500l1-.5v5.500H3z" fill="#fff" stroke="none" />
          <path d="M7.500 0v5M5.500 3.500l2 2 2-2" />
        </svg>
      </button>
      <button className="ml-4 text-right text-xs leading-4">
        4:28 PM
        <br />
        6/29/2025
      </button>
      <button aria-label="Notifications" className="ml-2">
        <svg viewBox="0 0 16 16" className="size-4" fill="none" stroke="#fff" strokeWidth="1.200">
          <path d="M8 2C5 2 3 4 3 7v3l-1.500 2.500h12L12.500 10M6 13c0 2.500 3 2.500 3 0M6 5.500h3L6 9h3M11.500 1h3L11.500 4.500h3" />
        </svg>
      </button>
    </footer>
  );
}

export default function App() {
  return (
    <div className="flex h-screen min-h-[720px] flex-col overflow-hidden bg-[#0f172a]">
      <div className="shrink-0 font-['Open_Sans','Noto_Sans',sans-serif] text-xs">
        <TabStrip />
        <AddressBar />
        <BookmarksBar />
      </div>
      <div className="flex min-h-0 flex-1 font-[Inter,sans-serif]">
        <div className="flex min-w-0 flex-1 flex-col">
          <Header />
          <div className="flex min-h-0 flex-1">
            <Sidebar />
            <Dashboard />
          </div>
        </div>
        <PageScrollbar />
      </div>
      <Taskbar />
    </div>
  );
}
